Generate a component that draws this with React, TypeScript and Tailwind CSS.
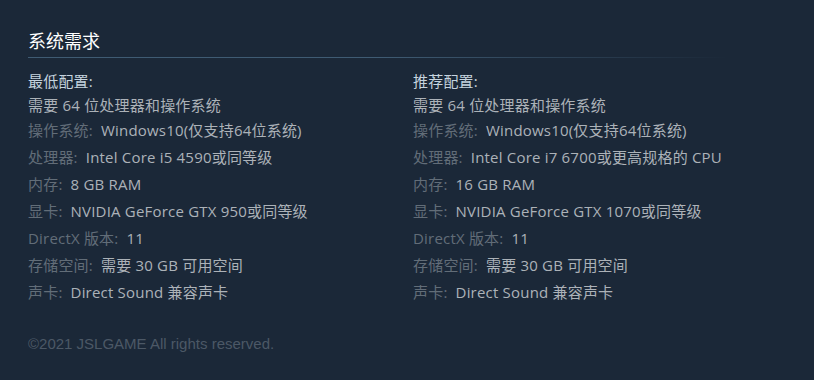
const minSpec: [string, string][] = [
  ['操作系统:', 'Windows10(仅支持64位系统)'],
  ['处理器:', 'Intel Core i5 4590或同等级'],
  ['内存:', '8 GB RAM'],
  ['显卡:', 'NVIDIA GeForce GTX 950或同等级'],
  ['DirectX 版本:', '11'],
  ['存储空间:', '需要 30 GB 可用空间'],
  ['声卡:', 'Direct Sound 兼容声卡'],
]

const recSpec: [string, string][] = [
  ['操作系统:', 'Windows10(仅支持64位系统)'],
  ['处理器:', 'Intel Core i7 6700或更高规格的 CPU'],
  ['内存:', '16 GB RAM'],
  ['显卡:', 'NVIDIA GeForce GTX 1070或同等级'],
  ['DirectX 版本:', '11'],
  ['存储空间:', '需要 30 GB 可用空间'],
  ['声卡:', 'Direct Sound 兼容声卡'],
]

function SpecColumn({ title, rows }: { title: string; rows: [string, string][] }) {
  return (
    <div className="flex flex-col tracking-[0.2px]">
      <div className="text-[#c6d4df] h-[24px] leading-[24px]">{title}</div>
      <div className="text-[#acb2b8] h-[24px] leading-[24px]">需要 64 位处理器和操作系统</div>
      <ul className="flex flex-col">
        {rows.map(([k, v]) => (
          <li key={k} className="h-[27px] leading-[27px] whitespace-nowrap">
            <span className="text-[#626d78]">{k}</span>
            <span className="text-[#acb2b8] ml-[8px]">{v}</span>
          </li>
        ))}
      </ul>
    </div>
  )
}

export default function App() {
  return (
    <div
      className="w-[814px] h-[380px] bg-[#1b2838] text-[15px] px-[28px] pt-[28px]"
      style={{ fontFamily: '"Open Sans", "Noto Sans CJK SC", sans-serif' }}
    >
      <h2 className="text-white text-[18px] leading-[27px] font-normal">系统需求</h2>
      <div className="h-px w-[700px] mt-[2px] bg-gradient-to-r from-[#3f5b73] via-[#3f5b73] to-transparent" />
      <div className="grid grid-cols-[385px_1fr] mt-[11px]">
        <SpecColumn title="最低配置:" rows={minSpec} />
        <SpecColumn title="推荐配置:" rows={recSpec} />
      </div>
      <p
        className="text-[#4c5866] text-[15px] mt-[27px]"
        style={{ fontFamily: '"Liberation Sans", Arial, sans-serif' }}
      >
        ©2021 JSLGAME All rights reserved.
      </p>
    </div>
  )
}
